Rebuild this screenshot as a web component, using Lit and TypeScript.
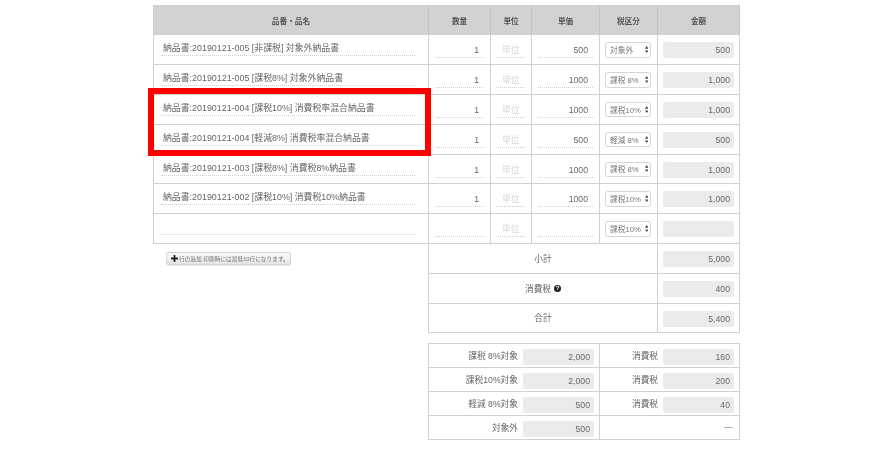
import { LitElement, html, css } from "lit";
import { customElement } from "lit/decorators.js";

const rows = [
  ["納品書:20190121-005 [非課税] 対象外納品書", "1", "500", "対象外", "500"],
  ["納品書:20190121-005 [課税8%] 対象外納品書", "1", "1000", "課税 8%", "1,000"],
  ["納品書:20190121-004 [課税10%] 消費税率混合納品書", "1", "1000", "課税10%", "1,000"],
  ["納品書:20190121-004 [軽減8%] 消費税率混合納品書", "1", "500", "軽減 8%", "500"],
  ["納品書:20190121-003 [課税8%] 消費税8%納品書", "1", "1000", "課税 8%", "1,000"],
  ["納品書:20190121-002 [課税10%] 消費税10%納品書", "1", "1000", "課税10%", "1,000"],
  ["", "", "", "課税10%", ""],
];
const breakdown = [
  ["課税 8%対象", "2,000", "160"],
  ["課税10%対象", "2,000", "200"],
  ["軽減 8%対象", "500", "40"],
];

@customElement("app-root")
export class AppRoot extends LitElement {
  static styles = css`
    :host {
      display: block;
      position: relative;
      width: 892px;
      height: 452px;
      background: #fff;
      overflow: hidden;
      font-family: "Liberation Sans", "Noto Sans CJK JP", sans-serif;
      font-size: 8.7px;
      color: #666;
    }
    .page {
      box-sizing: border-box;
      height: 452px;
      padding: 5px 0 0 153px;
      filter: blur(0.3px);
    }
    .grid {
      display: grid;
      grid-template-columns: 276px 62px 41px 68px 58px 82px;
      grid-template-rows: 30.4px;
      grid-auto-rows: 29.8px;
      width: 587px;
    }
    .cell {
      box-sizing: border-box;
      border-right: 1px solid #d0d0d0;
      border-bottom: 1px solid #d0d0d0;
      min-width: 0;
    }
    .first { border-left: 1px solid #d0d0d0; }
    .head {
      background: #d3d1d2;
      border-top: 1px solid #d0d0d0;
      border-right-color: #c4c4c4;
      display: flex;
      align-items: center;
      justify-content: center;
      font-size: 7.6px;
      font-weight: bold;
      color: #555;
    }
    .head.first { font-size: 7.7px; }
    .name { padding: 5px 13px 0 7px; }
    .name .field {
      box-sizing: border-box;
      height: 16px;
      padding: 1px 0 0 2px;
      line-height: 14px;
      font-size: 8.9px;
      border-bottom: 1px dotted #d0d0d0;
      color: #666;
      white-space: nowrap;
    }
    .inp { padding: 8px 6px 0; }
    .inp .field {
      height: 15px;
      line-height: 14px;
      padding-right: 5px;
      text-align: right;
      border-bottom: 1px dotted #d0d0d0;
      box-sizing: border-box;
      font-size: 8.7px;
    }
    .unit .field {
      text-align: left;
      padding: 0 0 0 6px;
      color: #d8d8d8;
    }
    .inp.narrow { padding: 8px 6px 0 5px; }
    .sel-cell {
      display: flex;
      justify-content: center;
      padding: 7px 6px 0 5px;
    }
    .select {
      box-sizing: border-box;
      width: 46px;
      height: 15.5px;
      border: 1px solid #d6d6d6;
      border-radius: 3px;
      background: #fff;
      display: flex;
      align-items: center;
      justify-content: space-between;
      padding: 0 2px 1px 4px;
      font-size: 7.7px;
      white-space: nowrap;
      color: #777;
    }
    .select svg { flex: none; width: 3.5px; height: 7px; }
    .amt-cell { padding: 7px 5px 0 5px; }
    .box {
      box-sizing: border-box;
      height: 16px;
      background: #ebebeb;
      border-radius: 2px;
      text-align: right;
      line-height: 17px;
      padding-right: 4px;
      color: #666;
    }
    .blank {
      grid-column: 1;
      box-sizing: border-box;
      border-right: 1px solid #d0d0d0;
    }
    .add-wrap { padding: 8px 0 0 13px; }
    .add {
      box-sizing: border-box;
      width: 125px;
      height: 13px;
      border: 1px solid #d4d4d4;
      border-radius: 2px;
      background: linear-gradient(#fbfbfb, #e4e4e4);
      box-shadow: 0 1px 1px rgba(0, 0, 0, 0.08);
      display: flex;
      align-items: center;
      gap: 1px;
      padding-left: 4px;
      font-size: 5.7px;
      color: #777;
      white-space: nowrap;
    }
    .add svg { width: 7px; height: 7px; flex: none; }
    .sumlabel {
      grid-column: span 4;
      display: flex;
      align-items: center;
      justify-content: center;
      gap: 3px;
      color: #666;
    }
    .q {
      width: 7px;
      height: 7px;
      border-radius: 50%;
      background: #222;
      color: #fff;
      font-size: 6px;
      font-weight: bold;
      line-height: 7px;
      text-align: center;
    }
    .sub {
      display: grid;
      grid-template-columns: 172px 140px;
      grid-auto-rows: 24px;
      margin: 10px 0 0 275px;
      width: 312px;
      border-top: 1px solid #d0d0d0;
    }
    .sub .cell {
      display: flex;
      align-items: flex-start;
      justify-content: flex-end;
      gap: 5px;
      padding: 5px 5px 0 0;
    }
    .sub .l { border-left: 1px solid #d0d0d0; }
    .sub .lbl { line-height: 14px; white-space: nowrap; }
    .sub .box { height: 16px; width: 71px; flex: none; }
    .sub .dash { width: 100%; text-align: right; line-height: 12px; padding-right: 1px; color: #888; }
    .mark {
      position: absolute;
      left: 148px;
      top: 88px;
      width: 283px;
      height: 68px;
      box-sizing: border-box;
      border: 6px solid #ff0000;
    }
  `;

  private arrows() {
    return html`<svg viewBox="0 0 4 8"><path d="M2 0 4 3H0ZM2 8 0 5H4Z" fill="#444"></path></svg>`;
  }

  render() {
    return html`
      <div class="page">
        <div class="grid">
          <div class="cell head first">品番・品名</div>
          <div class="cell head">数量</div>
          <div class="cell head">単位</div>
          <div class="cell head">単価</div>
          <div class="cell head">税区分</div>
          <div class="cell head">金額</div>
          ${rows.map(
            (r) => html`
              <div class="cell first name"><div class="field">${r[0]}</div></div>
              <div class="cell inp"><div class="field">${r[1]}</div></div>
              <div class="cell narrow unit inp"><div class="field">単位</div></div>
              <div class="cell inp"><div class="field">${r[2]}</div></div>
              <div class="cell sel-cell"><div class="select"><span>${r[3]}</span>${this.arrows()}</div></div>
              <div class="cell amt-cell"><div class="box">${r[4]}</div></div>
            `
          )}
          <div class="blank add-wrap">
            <div class="add">
              <svg viewBox="0 0 7 7"><path d="M2.6 0h1.8v2.6H7v1.8H4.4V7H2.6V4.4H0V2.6h2.6Z" fill="#222"></path></svg>
              <span>行の追加 印刷時には最低10行になります。</span>
            </div>
          </div>
          <div class="cell sumlabel">小計</div>
          <div class="cell amt-cell"><div class="box">5,000</div></div>
          <div class="blank"></div>
          <div class="cell sumlabel">消費税 <span class="q">?</span></div>
          <div class="cell amt-cell"><div class="box">400</div></div>
          <div class="blank"></div>
          <div class="cell sumlabel">合計</div>
          <div class="cell amt-cell"><div class="box">5,400</div></div>
        </div>
        <div class="sub">
          ${breakdown.map(
            (b) => html`
              <div class="cell l"><span class="lbl">${b[0]}</span><div class="box">${b[1]}</div></div>
              <div class="cell"><span class="lbl">消費税</span><div class="box">${b[2]}</div></div>
            `
          )}
          <div class="cell l"><span class="lbl">対象外</span><div class="box">500</div></div>
          <div class="cell"><div class="dash">—</div></div>
        </div>
      </div>
      <div class="mark"></div>
    `;
  }
}
